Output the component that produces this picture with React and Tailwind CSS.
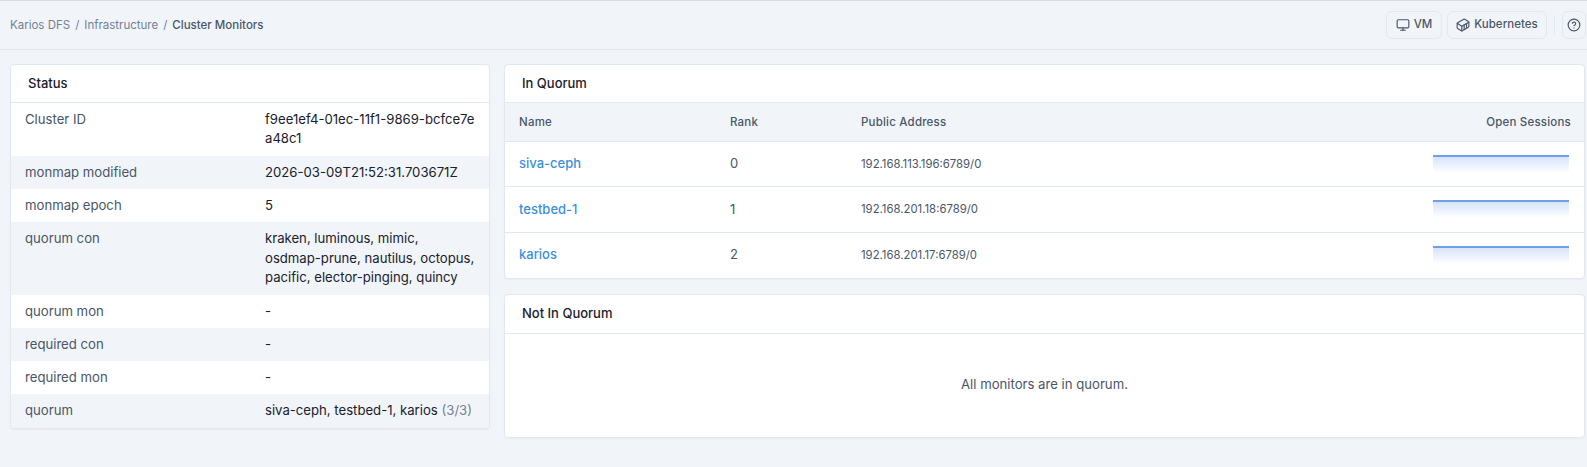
import React from 'react'
import { Monitor, Container, CircleHelp } from 'lucide-react'

const statusRows = [
  ['Cluster ID', 'f9ee1ef4-01ec-11f1-9869-bcfce7ea48c1', 'break-all'],
  ['monmap modified', '2026-03-09T21:52:31.703671Z'],
  ['monmap epoch', '5'],
  ['quorum con', 'kraken, luminous, mimic, osdmap-prune, nautilus, octopus, pacific, elector-pinging, quincy'],
  ['quorum mon', '-'],
  ['required con', '-'],
  ['required mon', '-'],
]

const monitors = [
  { name: 'siva-ceph', rank: 0, addr: '192.168.113.196:6789/0' },
  { name: 'testbed-1', rank: 1, addr: '192.168.201.18:6789/0' },
  { name: 'karios', rank: 2, addr: '192.168.201.17:6789/0' },
]

function Sparkline() {
  return (
    <div className="ml-auto mr-[1px] h-[18px] w-[136px] border-t-2 border-[#6f9fe8] bg-gradient-to-b from-[#d6e4fa] to-white" />
  )
}

export default function App() {
  return (
    <div className="h-[467px] overflow-hidden border-t border-[#d8dde5] bg-[#f1f5f9] font-['Inter',sans-serif] text-[#1a202c]">
      <header className="flex h-[49px] items-center justify-between border-b border-[#e2e8f0] pl-[10px] pr-[1px] text-[11.5px]">
        <div className="flex items-center gap-[5px] pt-[1px] text-[#718096]">
          <span>Karios DFS</span>
          <span>/</span>
          <span>Infrastructure</span>
          <span>/</span>
          <span className="font-medium text-[#4a5568]">Cluster Monitors</span>
        </div>
        <div className="flex items-center">
          <button className="flex h-[28px] w-[56px] items-center justify-center gap-[4px] rounded-md border border-[#e2e8f0] font-medium text-[#4a5568]">
            <Monitor size={14} />
            VM
          </button>
          <button className="ml-[5px] flex h-[28px] w-[100px] items-center justify-center gap-[4px] rounded-md border border-[#e2e8f0] font-medium text-[#4a5568]">
            <Container size={14} />
            Kubernetes
          </button>
          <div className="ml-[7px] h-[18px] w-px bg-[#e2e8f0]" />
          <button className="ml-[7px] flex h-[28px] w-[24px] items-center justify-center rounded-md border border-[#e2e8f0] text-[#4a5568]">
            <CircleHelp size={14} />
          </button>
        </div>
      </header>

      <main className="grid grid-cols-[480px_1fr] items-start gap-[14px] pl-[10px] pr-[2px] pt-[14px]">
        <section className="overflow-hidden rounded-[4px] border border-[#e2e8f0] bg-white shadow-[0_1px_2px_rgba(0,0,0,0.04)]">
          <h2 className="flex h-[38px] items-center border-b border-[#e2e8f0] px-[17px] text-[13px] font-medium">Status</h2>
          <div className="text-[13.15px] leading-[19.5px]">
            {statusRows.map(([label, value, cls], i) => (
              <div key={label} className={`grid grid-cols-[240px_1fr] py-[6.9px] pl-[14px] pr-[14px] ${i % 2 === 1 ? 'bg-[#f1f5f9]' : 'bg-white'}`}>
                <div className="text-[#4a5568]">{label}</div>
                <div className={cls}>{value}</div>
              </div>
            ))}
            <div className="grid grid-cols-[240px_1fr] bg-[#f1f5f9] py-[6.9px] pl-[14px] pr-[14px]">
              <div className="text-[#4a5568]">quorum</div>
              <div>siva-ceph, testbed-1, karios <span className="text-[#718096]">(3/3)</span></div>
            </div>
          </div>
        </section>

        <div className="flex flex-col gap-[15px]">
          <section className="overflow-hidden rounded-[4px] border border-[#e2e8f0] bg-white shadow-[0_1px_2px_rgba(0,0,0,0.04)]">
            <h2 className="flex h-[38px] items-center border-b border-[#e2e8f0] px-[17px] text-[13px] font-medium">In Quorum</h2>
            <table className="w-full table-fixed border-collapse">
              <thead>
                <tr className="h-[38px] bg-[#f1f5f9] text-left text-[11.5px] tracking-[0.2px] text-[#4a5568]">
                  <th className="w-[225px] pl-[14px] pt-[1px] font-medium">Name</th>
                  <th className="w-[131px] pt-[1px] font-medium">Rank</th>
                  <th className="pt-[1px] font-medium">Public Address</th>
                  <th className="w-[200px] pr-[13px] pt-[1px] text-right font-medium">Open Sessions</th>
                </tr>
              </thead>
              <tbody>
                {monitors.map(m => (
                  <tr key={m.name} className="h-[45.5px] border-t border-[#e2e8f0]">
                    <td className="pl-[14px] text-[13px] font-medium text-[#3b8fdd]">{m.name}</td>
                    <td className="text-[13px] text-[#4a5568]">{m.rank}</td>
                    <td className="pt-[1px] text-[11.35px] text-[#4a5568]">{m.addr}</td>
                    <td className="pr-[14px]"><Sparkline /></td>
                  </tr>
                ))}
              </tbody>
            </table>
          </section>

          <section className="overflow-hidden rounded-[4px] border border-[#e2e8f0] bg-white shadow-[0_1px_2px_rgba(0,0,0,0.04)]">
            <h2 className="flex h-[39px] items-center border-b border-[#e2e8f0] px-[17px] text-[13px] font-medium">Not In Quorum</h2>
            <div className="flex h-[103px] items-center justify-center text-[13.15px] text-[#4a5568]">All monitors are in quorum.</div>
          </section>
        </div>
      </main>
    </div>
  )
}
